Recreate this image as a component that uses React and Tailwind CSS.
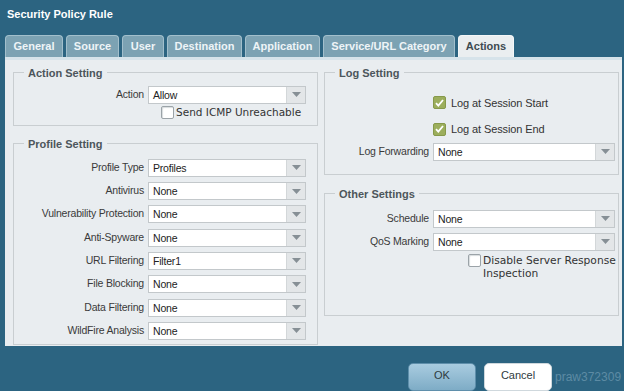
import React from 'react';

// Security Policy Rule — Actions tab

const tabs = [
  ['General', 58], ['Source', 53], ['User', 42], ['Destination', 75],
  ['Application', 75], ['Service/URL Category', 132], ['Actions', 56],
];

function Arrow() {
  return (
    <div className="w-[19px] h-full bg-[#e3e6e8] border-l border-[#d3d7d9] flex items-center justify-center">
      <svg width="9" height="5" viewBox="0 0 9 5"><path d="M0 0h9L4.5 5z" fill="#868f95" /></svg>
    </div>
  );
}

function Select({ value, w }) {
  return (
    <div className={`flex h-[18px] border border-[#c3c8cb] bg-white ${w}`}>
      <span className="flex-1 pl-[4px] leading-[16px] text-[10.5px] tracking-[-0.2px] text-[#222]">{value}</span>
      <Arrow />
    </div>
  );
}

function Check({ on }) {
  if (on) {
    return (
      <div className="w-[13px] h-[13px] rounded-[2px] bg-[#9cae5c] border border-[#86994a] flex items-center justify-center shrink-0">
        <svg width="9" height="8" viewBox="0 0 9 8"><path d="M1 4.2l2.3 2.4L8 1" stroke="white" strokeWidth="1.8" fill="none" /></svg>
      </div>
    );
  }
  return <div className="w-[13px] h-[13px] rounded-[2px] bg-white border border-[#9ba3a8] shadow-[inset_1px_1px_1px_#d8dcde] shrink-0" />;
}

function Row({ label, value, lw, sw }) {
  return (
    <div className="flex items-center">
      <span className={`${lw} text-right pr-[4px] text-[10.5px] tracking-[-0.2px] text-[#3a3a3a]`}>{label}</span>
      <Select value={value} w={sw} />
    </div>
  );
}

function Box({ title, className, children }) {
  return (
    <fieldset className={`border border-[#c9ced1] ${className}`}>
      <legend className="ml-[10px] px-[4px] font-bold text-[11px] leading-[14px] text-[#4d565b]">{title}</legend>
      {children}
    </fieldset>
  );
}

export default function App() {
  const profiles = [
    ['Profile Type', 'Profiles'], ['Antivirus', 'None'], ['Vulnerability Protection', 'None'],
    ['Anti-Spyware', 'None'], ['URL Filtering', 'Filter1'], ['File Blocking', 'None'],
    ['Data Filtering', 'None'], ['WildFire Analysis', 'None'],
  ];

  return (
    <div className="w-[624px] h-[391px] bg-[#2c6481] flex flex-col overflow-hidden font-['Liberation_Sans',Arial,sans-serif]">
      {/* title */}
      <div className="h-[35px] pl-[7px] pt-[7px] text-white font-bold text-[11px] leading-[14px]">Security Policy Rule</div>

      {/* tabs */}
      <div className="flex gap-[3px] pl-[5px] h-[22px] items-end">
        {tabs.map(([t, w]) => {
          const active = t === 'Actions';
          return (
            <div key={t} style={{ width: w }}
              className={`h-[22px] rounded-t-[4px] flex items-center justify-center font-bold text-[11px] border border-b-0 ${active ? 'bg-[#eaeef0] text-[#3d4a51] border-[#f4f7f8]' : 'bg-[#7ca2b3] text-[#eef4f7] border-[#a2bfcc]'}`}>
              {t}
            </div>
          );
        })}
      </div>

      {/* panel */}
      <div className="ml-[5px] w-[617px] h-[292px] bg-[#e9edf0] border-t-[3px] border-[#d6e3ea] flex gap-[6px] pl-[8px] pt-[6px]">
        {/* left */}
        <div className="w-[305px] flex flex-col">
          <Box title="Action Setting" className="h-[60px]">
            <div className="mt-[6px]">
              <Row label="Action" value="Allow" lw="w-[134px]" sw="w-[158px]" />
            </div>
            <div className="flex items-center gap-[2px] mt-[2px] pl-[147px]">
              <Check />
              <span className="text-[10.5px] leading-[13px] text-[#333] font-['DejaVu_Sans',sans-serif]">Send ICMP Unreachable</span>
            </div>
          </Box>
          <Box title="Profile Setting" className="mt-[11px] h-[208px]">
            <div className="mt-[8px] flex flex-col gap-[5.3px]">
              {profiles.map(([l, v]) => <Row key={l} label={l} value={v} lw="w-[134px]" sw="w-[158px]" />)}
            </div>
          </Box>
        </div>

        {/* right */}
        <div className="w-[295px] flex flex-col">
          <Box title="Log Setting" className="h-[109px]">
            <div className="pl-[108px] mt-[15px] flex flex-col gap-[10px]">
              <div className="flex items-center gap-[5px]">
                <Check on />
                <span className="text-[11px] text-[#333] tracking-[-0.1px]">Log at Session Start</span>
              </div>
              <div className="flex items-center gap-[5px]">
                <Check on />
                <span className="text-[11px] text-[#333] tracking-[-0.1px]">Log at Session End</span>
              </div>
            </div>
            <div className="mt-[5px]">
              <Row label="Log Forwarding" value="None" lw="w-[108px]" sw="w-[182px]" />
            </div>
          </Box>
          <Box title="Other Settings" className="mt-[12px] h-[129px]">
            <div className="mt-[9px] flex flex-col gap-[5px]">
              <Row label="Schedule" value="None" lw="w-[108px]" sw="w-[182px]" />
              <Row label="QoS Marking" value="None" lw="w-[108px]" sw="w-[182px]" />
            </div>
            <div className="flex items-start gap-[2px] mt-[3px] pl-[143px]">
              <Check />
              <span className="text-[10.7px] leading-[13px] text-[#333] font-['DejaVu_Sans',sans-serif]">Disable Server Response<br />Inspection</span>
            </div>
          </Box>
        </div>
      </div>

      {/* buttons */}
      <div className="flex items-start pt-[17px] pl-[408px] gap-[8px]">
        <div className="w-[68px] h-[28px] rounded-[5px] bg-gradient-to-b from-[#a9cce0] to-[#7eacc6] border border-[#5f8fab] flex items-center justify-center text-[11px] text-[#2e3a40] pb-[3px]">OK</div>
        <div className="w-[68px] h-[28px] rounded-[5px] bg-white border border-[#cfd8dd] flex items-center justify-center text-[11px] text-[#2e3a40] pb-[3px]">Cancel</div>
        <span className="-ml-[5px] mt-[5px] text-[12px] text-[#5d8ba4]">praw372309</span>
      </div>
    </div>
  );
}
